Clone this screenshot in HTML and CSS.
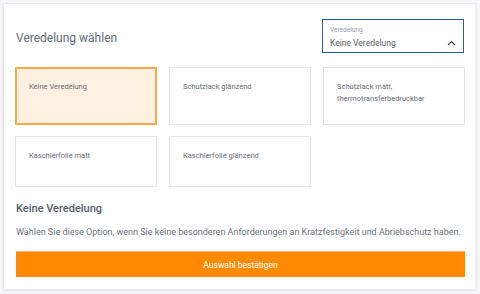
FILE: index.html
```html
<!DOCTYPE html>
<html lang="de">
<head>
<meta charset="utf-8">
<link rel="stylesheet" href="styles.css">
</head>
<body>
<div class="panel">
  <div class="header">
    <h2 class="title">Veredelung wählen</h2>
    <div class="select">
      <span class="select-label">Veredelung</span>
      <span class="select-value">Keine Veredelung</span>
      <svg class="chevron" width="9" height="6" viewBox="0 0 9 6"><path d="M1 5 L4.5 1.5 L8 5" fill="none" stroke="#3a3f47" stroke-width="1.1"/></svg>
    </div>
  </div>
  <div class="options">
    <div class="option selected">Keine Veredelung</div>
    <div class="option">Schutzlack glänzend</div>
    <div class="option">Schutzlack matt,<br>thermotransferbedruckbar</div>
    <div class="option">Kaschierfolie matt</div>
    <div class="option">Kaschierfolie glänzend</div>
  </div>
  <h3 class="desc-title">Keine Veredelung</h3>
  <p class="desc">Wählen Sie diese Option, wenn Sie keine besonderen Anforderungen an Kratzfestigkeit und Abriebschutz haben.</p>
  <button class="confirm">Auswahl bestätigen</button>
</div>
</body>
</html>
```
FILE: styles.css
```css
* { box-sizing: border-box; }
html, body { margin: 0; padding: 0; background: #f7f7f9; }
body {
  font-family: "Roboto", "Liberation Sans", sans-serif;
  color: #5f6570;
  padding: 3px 4px 4px 3px;
}
.panel {
  background: #fff;
  border: 1px solid #ebebef;
  box-shadow: 0 1px 3px rgba(0,0,0,0.08);
  height: 287px;
  padding: 15px 11px 0 11px;
}
.header {
  display: flex;
  justify-content: space-between;
  align-items: center;
  height: 34px;
}
.title {
  margin: 4px 0 0 1px;
  font-size: 12px;
  font-weight: 400;
  color: #646a75;
}
.select {
  position: relative;
  width: 142px;
  height: 34px;
  border: 1.5px solid #2f5d9c;
  padding: 6px 0 0 7px;
  display: flex;
  flex-direction: column;
}
.select-label {
  font-size: 6.5px;
  color: #959aa2;
  line-height: 9px;
}
.select-value {
  font-size: 8.5px;
  color: #5a5f68;
  line-height: 14px;
  margin-top: 1px;
}
.chevron {
  position: absolute;
  right: 7px;
  top: 20px;
}
.options {
  display: grid;
  grid-template-columns: repeat(3, 142px);
  column-gap: 12px;
  row-gap: 11px;
  margin-top: 14px;
}
.option {
  border: 1px solid #e6e6ea;
  min-height: 51px;
  padding: 13px 13px 19px 13px;
  font-size: 7.5px;
  line-height: 12px;
  color: #676c74;
}
.option.selected {
  background: #fff1e2;
  border: 2px solid #f8a646;
  padding: 12px 12px 18px 12px;
}
.desc-title {
  margin: 14px 0 0 1px;
  font-size: 11px;
  line-height: 15px;
  font-weight: 500;
  color: #555c68;
}
.desc {
  margin: 10px 0 0 1px;
  font-size: 9px;
  line-height: 13px;
  color: #6e747e;
  white-space: nowrap;
}
.confirm {
  display: block;
  margin: 12px 0 0 1px;
  width: 449px;
  height: 26px;
  border: none;
  border-top: 1px solid #ffb55c;
  background: #ff8a00;
  color: #fff;
  font-family: inherit;
  font-size: 8.5px;
  padding: 0;
}
```
